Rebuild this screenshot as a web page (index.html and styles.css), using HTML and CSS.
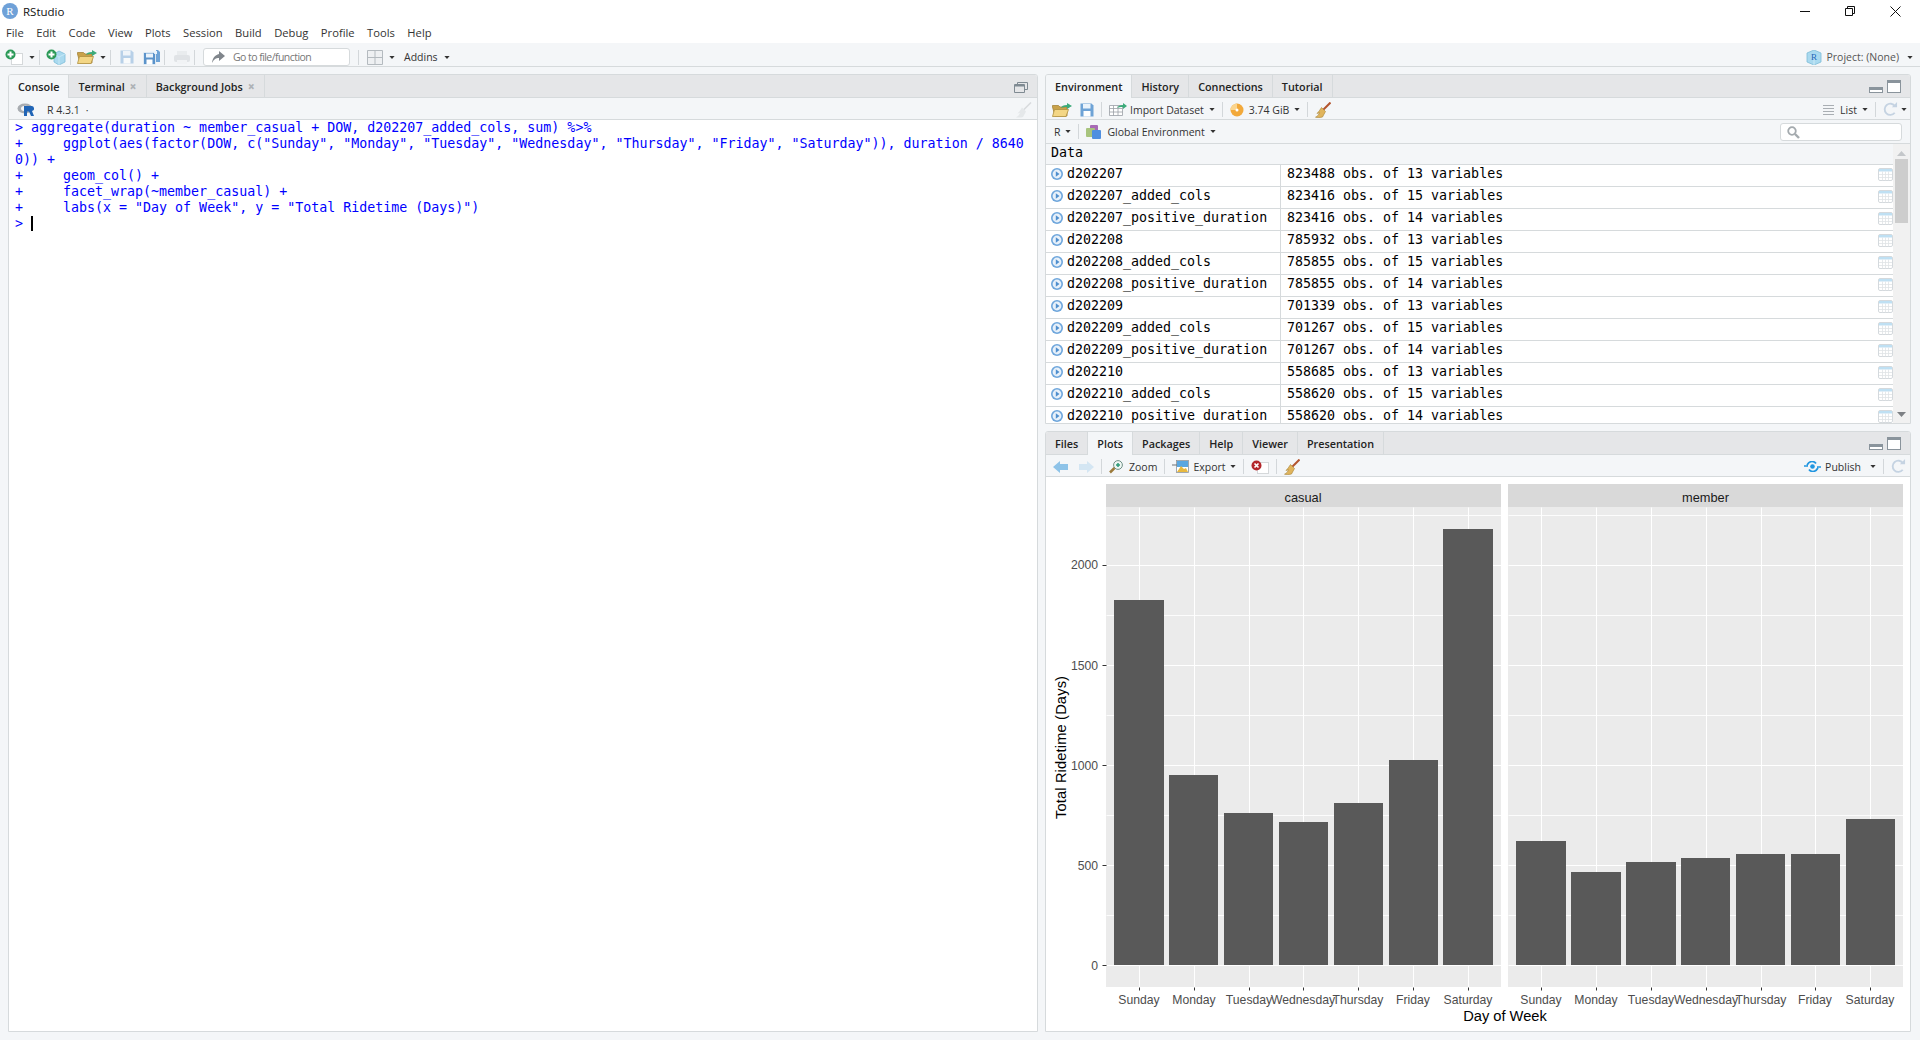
FILE: index.html
```html
<!DOCTYPE html>
<html lang="en">
<head>
    <meta charset="UTF-8">
    <title>RStudio</title>
    <link rel="stylesheet" href="styles.css">
</head>
<body>
    <!-- shared toolbar icons -->
    <svg class="icon-defs" width="0" height="0">
        <symbol id="i-arrow" viewBox="0 0 7 4"><path d="M0 0h7L3.500 4z" fill="#333"/></symbol>
        <symbol id="i-new" viewBox="0 0 20 16">
            <rect x="6.500" y="4.500" width="11" height="11" fill="#fff" stroke="#d5d8da"/>
            <circle cx="5.500" cy="5.500" r="5" fill="#2c9a58"/>
            <path d="M5.500 2.500v6M2.500 5.500h6" stroke="#fff" stroke-width="2"/>
        </symbol>
        <symbol id="i-project" viewBox="0 0 20 16">
            <path d="M8 5l5-3 6 3v8l-6 3-5-3z" fill="#a9d9ef" stroke="#7dbcd8" stroke-width=".8"/>
            <path d="M13 8v8M8 5l5 3 6-3" fill="none" stroke="#cdebf7" stroke-width=".8"/>
            <circle cx="5.500" cy="5.500" r="5" fill="#2c9a58"/>
            <path d="M5.500 2.500v6M2.500 5.500h6" stroke="#fff" stroke-width="2"/>
        </symbol>
        <symbol id="i-folder" viewBox="0 0 21 14">
            <path d="M.5 4V2.500h6l1.500 1.500h7v9H3z" fill="#c9a24a" stroke="#a5843a" stroke-width=".8"/>
            <path d="M2.500 6.500h14l-2.500 7H.5z" fill="#f3d685" stroke="#b0903f" stroke-width=".8"/>
            <path d="M9 5c.5-2 2.500-3 6-3V0l5 3-5 3V4c-2.500 0-4.500 0-6 1z" fill="#3cab7a"/>
        </symbol>
        <symbol id="i-save" viewBox="0 0 14 14">
            <path d="M.5.500h11l2 2v11H.5z" fill="#6ea3d6"/>
            <rect x="3" y="1" width="7.500" height="4.500" fill="#eaf3fb"/>
            <rect x="3.500" y="8" width="7" height="5.500" fill="#fff"/>
        </symbol>
        <symbol id="i-saveall" viewBox="0 0 17 15">
            <path d="M5 0h10l2 2v10h-4V0z" fill="#6ea3d6"/>
            <rect x="7" y="1" width="7" height="3" fill="#eaf3fb"/>
            <path d="M.5 2.500h10l2 2v10H.5z" fill="#5b93ca" stroke="#fff" stroke-width=".6"/>
            <rect x="3" y="3.500" width="7" height="4" fill="#eaf3fb"/>
            <rect x="3.500" y="9.500" width="6" height="5" fill="#fff"/>
        </symbol>
        <symbol id="i-broom" viewBox="0 0 16 16">
            <path d="M15.500.500L8 8" stroke="#b3552f" stroke-width="2"/>
            <path d="M6.500 5.500l4 4-3 5.500c-2.500.8-5 .5-7 .2 2-.8 3.500-2.700 4-4.500L2 11.500c1.500-1.500 3-3.500 4.500-6z" fill="#e0b45c" stroke="#a88334" stroke-width=".6"/>
        </symbol>
        <symbol id="i-refresh" viewBox="0 0 16 16">
            <path d="M12.500 11.500a6 6 0 1 1 .3-7" fill="none" stroke="#c5d3e2" stroke-width="2"/>
            <path d="M9.500 5.500h5.500V0z" fill="#c5d3e2"/>
        </symbol>
        <symbol id="i-pane-min" viewBox="0 0 14 6"><rect x=".5" y=".5" width="13" height="5" fill="#fff" stroke="#8a949c"/><rect x="1" y="1" width="12" height="2" fill="#8a949c"/></symbol>
        <symbol id="i-pane-max" viewBox="0 0 14 13"><rect x=".5" y=".5" width="13" height="12" fill="#fff" stroke="#8a949c"/><rect x="1" y="1" width="12" height="2" fill="#8a949c"/></symbol>
        <symbol id="i-play" viewBox="0 0 12 12"><circle cx="6" cy="6" r="6" fill="#6ea6dc"/><circle cx="6" cy="6" r="4.400" fill="#e8f1fa"/><path d="M4.800 3.300L8.500 6 4.800 8.700z" fill="#4f8fce"/></symbol>
        <symbol id="i-table" viewBox="0 0 15 13">
            <rect x=".5" y=".5" width="14" height="12" rx="1.500" fill="#fff" stroke="#d4d9dd"/>
            <rect x="1" y="1" width="13" height="2.500" fill="#bfe0f3"/>
            <path d="M1 6.500h13M1 9.500h13M4.500 3.500v9M7.500 3.500v9M10.500 3.500v9" stroke="#dfe3e6" stroke-width=".8"/>
        </symbol>
    </svg>

    <div class="app">
        <div class="titlebar">
            <span class="app-logo">R</span>
            <span class="app-name">RStudio</span>
            <div class="win-controls">
                <svg width="10" height="10" viewBox="0 0 10 10"><path d="M0 5.500h10" stroke="#111"/></svg>
                <svg width="10" height="10" viewBox="0 0 10 10"><path d="M.5 2.500h7v7h-7zM2.500 2.500v-2h7v7h-2" fill="none" stroke="#111"/></svg>
                <svg width="11" height="11" viewBox="0 0 11 11"><path d="M.5.500l10 10M10.500.500l-10 10" stroke="#111"/></svg>
            </div>
        </div>

        <nav class="menubar">
            <span>File</span><span>Edit</span><span>Code</span><span>View</span><span>Plots</span><span>Session</span><span>Build</span><span>Debug</span><span>Profile</span><span>Tools</span><span>Help</span>
        </nav>

        <div class="main-toolbar">
            <svg class="ico ml-5" width="20" height="16"><use href="#i-new"/></svg>
            <svg class="caret ml-4" width="7" height="4"><use href="#i-arrow"/></svg>
            <i class="sep"></i>
            <svg class="ico" width="20" height="16"><use href="#i-project"/></svg>
            <i class="sep"></i>
            <svg class="ico" width="21" height="14"><use href="#i-folder"/></svg>
            <svg class="caret ml-2" width="7" height="4"><use href="#i-arrow"/></svg>
            <i class="sep"></i>
            <svg class="ico dim ml-3" width="14" height="14"><use href="#i-save"/></svg>
            <svg class="ico ml-9" width="17" height="15"><use href="#i-saveall"/></svg>
            <i class="sep"></i>
            <svg class="ico dim ml-3" width="16" height="13" viewBox="0 0 16 13"><rect x="3" y="0" width="10" height="5" fill="#dde1e4"/><rect y="4" width="16" height="7" rx="2" fill="#c9ced2"/><rect x="3" y="9" width="10" height="4" fill="#eef0f2"/></svg>
            <i class="sep"></i>
            <div class="goto ml-2">
                <svg width="13" height="12" viewBox="0 0 13 12"><path d="M7 0l6 5-6 5V7C4 7 2 8 0 12c.5-5 3-8 7-9z" fill="#80868c"/></svg>
                <span>Go to file/function</span>
            </div>
            <i class="sep ml-8"></i>
            <svg class="ico ml-2" width="16" height="15" viewBox="0 0 16 15"><path d="M.5.500h15v14H.5zM.5 7.500h15M8 .5v14" fill="#eef0f2" stroke="#b4babf"/></svg>
            <svg class="caret ml-6" width="7" height="4"><use href="#i-arrow"/></svg>
            <span class="tb-text addins">Addins</span>
            <svg class="caret ml-6" width="7" height="4"><use href="#i-arrow"/></svg>
            <div class="project">
                <svg width="16" height="15" viewBox="0 0 16 15"><path d="M1 3l7-3 7 3v9l-7 3-7-3z" fill="#a9d9ef" stroke="#7dbcd8" stroke-width=".8"/><path d="M8 4v11" stroke="#d5eef9" stroke-width=".8"/><text x="8" y="10" class="cube-r">R</text></svg>
                <span>Project: (None)</span>
                <svg class="caret ml-3" width="7" height="4"><use href="#i-arrow"/></svg>
            </div>
        </div>

        <div class="workspace">
            <section class="pane pane-left">
                <div class="tabs">
                    <div class="tab active">Console</div>
                    <div class="tab">Terminal <b class="x">×</b></div>
                    <div class="tab">Background Jobs <b class="x">×</b></div>
                    <div class="pane-btns">
                        <svg width="14" height="11" viewBox="0 0 14 11"><path d="M3.500 2.500V.5h10v7h-3" fill="none" stroke="#7f8a92"/><path d="M.5 2.500h10v8H.5z" fill="none" stroke="#7f8a92"/><path d="M1 3.500h9" stroke="#7f8a92" stroke-width="2"/></svg>
                    </div>
                </div>
                <div class="toolbar console-bar">
                    <svg width="18" height="13" viewBox="0 0 18 13"><ellipse cx="8" cy="5.500" rx="7.500" ry="5" fill="#a8acb1"/><ellipse cx="8.500" cy="5.500" rx="4.500" ry="2.800" fill="#f4f6f8"/><path d="M7 3h7a2.500 2.500 0 0 1 1 5l2 5h-3l-2-4.500h-2V13H7z" fill="#2165b6"/></svg>
                    <span class="tb-text r-version">R 4.3.1</span>
                    <span class="tb-text tiny-dot">·</span>
                    <svg class="ico dim push-right clear-btn" width="19" height="16" viewBox="0 0 16 16"><path d="M15.500.500L8 8" stroke="#b5babd" stroke-width="1.500"/><path d="M6.500 5.500l4 4-3 5.500c-2.500.8-5 .5-7 .2 2-.8 3.500-2.700 4-4.500L2 11.500c1.500-1.500 3-3.500 4.500-6z" fill="#d4d8da"/></svg>
                </div>
                <div class="console">
                    <div>&gt; aggregate(duration ~ member_casual + DOW, d202207_added_cols, sum) %&gt;%</div>
                    <div>+     ggplot(aes(factor(DOW, c("Sunday", "Monday", "Tuesday", "Wednesday", "Thursday", "Friday", "Saturday")), duration / 8640</div>
                    <div>0)) +</div>
                    <div>+     geom_col() +</div>
                    <div>+     facet_wrap(~member_casual) +</div>
                    <div>+     labs(x = "Day of Week", y = "Total Ridetime (Days)")</div>
                    <div>&gt; <span class="cursor"></span></div>
                </div>
            </section>

            <div class="right-col">
                <section class="pane pane-env">
                    <div class="tabs">
                        <div class="tab active">Environment</div>
                        <div class="tab">History</div>
                        <div class="tab">Connections</div>
                        <div class="tab">Tutorial</div>
                        <div class="pane-btns">
                            <svg width="14" height="6"><use href="#i-pane-min"/></svg>
                            <svg width="14" height="13"><use href="#i-pane-max"/></svg>
                        </div>
                    </div>
                    <div class="toolbar">
                        <svg class="ico ml-6" width="21" height="14"><use href="#i-folder"/></svg>
                        <svg class="ico ml-7" width="14" height="14"><use href="#i-save"/></svg>
                        <i class="sep"></i>
                        <svg class="ico" width="18" height="13" viewBox="0 0 18 13"><path d="M.5 2.500h13v10H.5zM.5 5.500h13M.5 9h13M4.500 2.500v10M9 2.500v10" fill="#fff" stroke="#9aa0a6" stroke-width=".8"/><path d="M8 5c1-2 3-3 6-3V0l4 3-4 3V4c-2.500 0-4.500 0-6 1z" fill="#3cab7a"/></svg>
                        <span class="tb-text ml-3">Import Dataset</span>
                        <svg class="caret" width="7" height="4"><use href="#i-arrow"/></svg>
                        <i class="sep"></i>
                        <svg class="ico" width="14" height="14" viewBox="0 0 14 14"><circle cx="7" cy="7" r="6.500" fill="#f2a93b"/><path d="M7 7V.5A6.500 6.500 0 0 0 .5 7z" fill="#fbd58e"/><circle cx="7" cy="7" r="1.500" fill="#fff"/></svg>
                        <span class="tb-text ml-5">3.74 GiB</span>
                        <svg class="caret" width="7" height="4"><use href="#i-arrow"/></svg>
                        <i class="sep"></i>
                        <svg class="ico" width="16" height="16"><use href="#i-broom"/></svg>
                        <svg class="ico push-right" width="11" height="10" viewBox="0 0 11 10"><path d="M0 .5h11M0 3.500h11M0 6.500h11M0 9.500h11" stroke="#a9aeb3"/></svg>
                        <span class="tb-text ml-6">List</span>
                        <svg class="caret" width="7" height="4"><use href="#i-arrow"/></svg>
                        <i class="sep"></i>
                        <svg class="ico" width="15" height="15"><use href="#i-refresh"/></svg>
                        <svg class="caret ml-3 mr-3" width="7" height="4"><use href="#i-arrow"/></svg>
                    </div>
                    <div class="toolbar env-bar">
                        <span class="tb-text ml-8">R</span>
                        <svg class="caret" width="7" height="4"><use href="#i-arrow"/></svg>
                        <i class="sep"></i>
                        <svg class="ico" width="15" height="14" viewBox="0 0 15 14"><rect x="4" width="8" height="9" rx="1" fill="#a86bb5"/><rect y="3" width="9" height="9" rx="1" fill="#a8c47e"/><rect x="6" y="5" width="9" height="9" rx="1" fill="#4f8fe0"/></svg>
                        <span class="tb-text ml-6">Global Environment</span>
                        <svg class="caret" width="7" height="4"><use href="#i-arrow"/></svg>
                        <div class="env-search">
                            <svg width="13" height="13" viewBox="0 0 13 13"><circle cx="5" cy="5" r="3.800" fill="none" stroke="#a4aaae" stroke-width="1.800"/><path d="M8 8l4 4" stroke="#a4aaae" stroke-width="2.400"/></svg>
                        </div>
                    </div>
                    <div class="env-body">
                        <div class="env-list">
                            <div class="env-head">Data</div>
                            <div class="env-row"><span class="env-name"><svg width="12" height="12"><use href="#i-play"/></svg>d202207</span><span class="env-val">823488 obs. of 13 variables</span><svg class="env-grid" width="15" height="13"><use href="#i-table"/></svg></div>
                            <div class="env-row"><span class="env-name"><svg width="12" height="12"><use href="#i-play"/></svg>d202207_added_cols</span><span class="env-val">823416 obs. of 15 variables</span><svg class="env-grid" width="15" height="13"><use href="#i-table"/></svg></div>
                            <div class="env-row"><span class="env-name"><svg width="12" height="12"><use href="#i-play"/></svg>d202207_positive_duration</span><span class="env-val">823416 obs. of 14 variables</span><svg class="env-grid" width="15" height="13"><use href="#i-table"/></svg></div>
                            <div class="env-row"><span class="env-name"><svg width="12" height="12"><use href="#i-play"/></svg>d202208</span><span class="env-val">785932 obs. of 13 variables</span><svg class="env-grid" width="15" height="13"><use href="#i-table"/></svg></div>
                            <div class="env-row"><span class="env-name"><svg width="12" height="12"><use href="#i-play"/></svg>d202208_added_cols</span><span class="env-val">785855 obs. of 15 variables</span><svg class="env-grid" width="15" height="13"><use href="#i-table"/></svg></div>
                            <div class="env-row"><span class="env-name"><svg width="12" height="12"><use href="#i-play"/></svg>d202208_positive_duration</span><span class="env-val">785855 obs. of 14 variables</span><svg class="env-grid" width="15" height="13"><use href="#i-table"/></svg></div>
                            <div class="env-row"><span class="env-name"><svg width="12" height="12"><use href="#i-play"/></svg>d202209</span><span class="env-val">701339 obs. of 13 variables</span><svg class="env-grid" width="15" height="13"><use href="#i-table"/></svg></div>
                            <div class="env-row"><span class="env-name"><svg width="12" height="12"><use href="#i-play"/></svg>d202209_added_cols</span><span class="env-val">701267 obs. of 15 variables</span><svg class="env-grid" width="15" height="13"><use href="#i-table"/></svg></div>
                            <div class="env-row"><span class="env-name"><svg width="12" height="12"><use href="#i-play"/></svg>d202209_positive_duration</span><span class="env-val">701267 obs. of 14 variables</span><svg class="env-grid" width="15" height="13"><use href="#i-table"/></svg></div>
                            <div class="env-row"><span class="env-name"><svg width="12" height="12"><use href="#i-play"/></svg>d202210</span><span class="env-val">558685 obs. of 13 variables</span><svg class="env-grid" width="15" height="13"><use href="#i-table"/></svg></div>
                            <div class="env-row"><span class="env-name"><svg width="12" height="12"><use href="#i-play"/></svg>d202210_added_cols</span><span class="env-val">558620 obs. of 15 variables</span><svg class="env-grid" width="15" height="13"><use href="#i-table"/></svg></div>
                            <div class="env-row"><span class="env-name"><svg width="12" height="12"><use href="#i-play"/></svg>d202210_positive_duration</span><span class="env-val">558620 obs. of 14 variables</span><svg class="env-grid" width="15" height="13"><use href="#i-table"/></svg></div>
                        </div>
                        <div class="scrollbar">
                            <svg width="9" height="5" viewBox="0 0 9 5"><path d="M0 5h9L4.500 0z" fill="#c4c7ca"/></svg>
                            <div class="thumb"></div>
                            <svg class="scroll-down" width="9" height="5" viewBox="0 0 9 5"><path d="M0 0h9L4.500 5z" fill="#7d8084"/></svg>
                        </div>
                    </div>
                </section>

                <section class="pane pane-plots">
                    <div class="tabs">
                        <div class="tab">Files</div>
                        <div class="tab active">Plots</div>
                        <div class="tab">Packages</div>
                        <div class="tab">Help</div>
                        <div class="tab">Viewer</div>
                        <div class="tab">Presentation</div>
                        <div class="pane-btns">
                            <svg width="14" height="6"><use href="#i-pane-min"/></svg>
                            <svg width="14" height="13"><use href="#i-pane-max"/></svg>
                        </div>
                    </div>
                    <div class="toolbar">
                        <svg class="ico ml-7" width="15" height="12" viewBox="0 0 15 12"><path d="M0 6l7-6v3h8v6H7v3z" fill="#8ec3e8"/></svg>
                        <svg class="ico ml-11 dim-more" width="15" height="12" viewBox="0 0 15 12"><path d="M15 6L8 0v3H0v6h8v3z" fill="#8ec3e8"/></svg>
                        <i class="sep"></i>
                        <svg class="ico" width="14" height="14" viewBox="0 0 14 14"><circle cx="9" cy="5" r="4.400" fill="#eef7f3" stroke="#6f8f86"/><path d="M9 3v4M7 5h4" stroke="#2c9a78" stroke-width="1.500"/><path d="M5.500 8L1 12.500" stroke="#9c7a3a" stroke-width="2.500"/></svg>
                        <span class="tb-text ml-6">Zoom</span>
                        <i class="sep"></i>
                        <svg class="ico" width="17" height="13" viewBox="0 0 17 13"><rect x="4.500" y=".5" width="12" height="12" fill="#fff" stroke="#8c9298" stroke-width=".8"/><rect x="5" y="1" width="11" height="6" fill="#5aa7e0"/><path d="M5 12l4-6 3 3 2-1 2 4z" fill="#e8b93f"/><path d="M0 5h5" stroke="#6d7378" stroke-width="1.200"/></svg>
                        <span class="tb-text ml-4">Export</span>
                        <svg class="caret" width="7" height="4"><use href="#i-arrow"/></svg>
                        <i class="sep"></i>
                        <svg class="ico" width="18" height="14" viewBox="0 0 18 14"><rect x="6.500" y="2.500" width="11" height="11" fill="#fff" stroke="#d5d8da"/><circle cx="5.500" cy="5.500" r="5" fill="#b3262b"/><path d="M3.500 3.500l4 4M7.500 3.500l-4 4" stroke="#fff" stroke-width="1.700"/></svg>
                        <i class="sep"></i>
                        <svg class="ico" width="16" height="16"><use href="#i-broom"/></svg>
                        <svg class="ico push-right" width="17" height="11" viewBox="0 0 17 11"><path d="M3 4c1.500-2.500 3-3.500 5-3.500s3 .6 4 2M14 7c-1.500 2.500-3 3.500-5 3.500S6 10 5 8.500M0 5h4M13 6h4" fill="none" stroke="#2196e0" stroke-width="1.700"/><circle cx="8.500" cy="5.500" r="2.300" fill="#2196e0"/></svg>
                        <span class="tb-text ml-4">Publish</span>
                        <svg class="caret ml-9" width="7" height="4"><use href="#i-arrow"/></svg>
                        <i class="sep"></i>
                        <svg class="ico mr-4" width="15" height="15"><use href="#i-refresh"/></svg>
                    </div>
                    <div class="plot-area">
                        <!-- coordinates in the viewBox are window pixels -->
                        <svg class="plot" width="864" height="555" viewBox="1046 477 864 555">
                            <rect class="strip" x="1106" y="484" width="395" height="23"/>
                            <rect class="strip" x="1508" y="484" width="395" height="23"/>
                            <text class="strip-text" x="1303" y="502">casual</text>
                            <text class="strip-text" x="1705.500" y="502">member</text>

                            <rect class="panel" x="1106" y="507" width="395" height="480"/>
                            <rect class="panel" x="1508" y="507" width="395" height="480"/>

                            <path class="grid minor" d="M1106 515H1501M1106 615H1501M1106 715H1501M1106 815H1501M1106 915H1501M1508 515H1903M1508 615H1903M1508 715H1903M1508 815H1903M1508 915H1903"/>
                            <path class="grid" d="M1106 565H1501M1106 665H1501M1106 765H1501M1106 865H1501M1106 965H1501M1508 565H1903M1508 665H1903M1508 765H1903M1508 865H1903M1508 965H1903"/>
                            <path class="grid" d="M1139 507V987M1194 507V987M1249 507V987M1303 507V987M1358 507V987M1413 507V987M1468 507V987M1541 507V987M1596 507V987M1651 507V987M1706 507V987M1761 507V987M1815 507V987M1870 507V987"/>

                            <g class="bars">
                                <rect x="1114" y="600" width="50" height="365"/>
                                <rect x="1169" y="775" width="49" height="190"/>
                                <rect x="1224" y="813" width="49" height="152"/>
                                <rect x="1279" y="822" width="49" height="143"/>
                                <rect x="1334" y="803" width="49" height="162"/>
                                <rect x="1389" y="760" width="49" height="205"/>
                                <rect x="1443" y="529" width="50" height="436"/>
                                <rect x="1516" y="841" width="50" height="124"/>
                                <rect x="1571" y="872" width="50" height="93"/>
                                <rect x="1626" y="862" width="50" height="103"/>
                                <rect x="1681" y="858" width="49" height="107"/>
                                <rect x="1736" y="854" width="49" height="111"/>
                                <rect x="1791" y="854" width="49" height="111"/>
                                <rect x="1846" y="819" width="49" height="146"/>
                            </g>

                            <path class="ticks" d="M1102 565H1106M1102 665H1106M1102 765H1106M1102 865H1106M1102 965H1106M1139 987V990M1194 987V990M1249 987V990M1303 987V990M1358 987V990M1413 987V990M1468 987V990M1541 987V990M1596 987V990M1651 987V990M1706 987V990M1761 987V990M1815 987V990M1870 987V990"/>

                            <g class="y-labels">
                                <text x="1098" y="569">2000</text>
                                <text x="1098" y="670">1500</text>
                                <text x="1098" y="770">1000</text>
                                <text x="1098" y="870">500</text>
                                <text x="1098" y="970">0</text>
                            </g>
                            <g class="x-labels">
                                <text x="1139" y="1004">Sunday</text>
                                <text x="1194" y="1004">Monday</text>
                                <text x="1249" y="1004">Tuesday</text>
                                <text x="1303" y="1004">Wednesday</text>
                                <text x="1358" y="1004">Thursday</text>
                                <text x="1413" y="1004">Friday</text>
                                <text x="1468" y="1004">Saturday</text>
                                <text x="1541" y="1004">Sunday</text>
                                <text x="1596" y="1004">Monday</text>
                                <text x="1651" y="1004">Tuesday</text>
                                <text x="1706" y="1004">Wednesday</text>
                                <text x="1761" y="1004">Thursday</text>
                                <text x="1815" y="1004">Friday</text>
                                <text x="1870" y="1004">Saturday</text>
                            </g>
                            <text class="axis-title" x="1505" y="1021">Day of Week</text>
                            <text class="axis-title" x="1066" y="747.500" transform="rotate(-90 1066 747.500)" textLength="143">Total Ridetime (Days)</text>
                        </svg>
                    </div>
                </section>
            </div>
        </div>
    </div>
</body>
</html>
```

FILE: styles.css
```css
* {
    margin: 0;
    padding: 0;
    box-sizing: border-box;
}

body {
    font-family: "Open Sans", "Noto Sans", sans-serif;
    font-size: 11px;
    color: #333;
    background: #f4f6f8;
    overflow: hidden;
}

.icon-defs {
    position: absolute;
}

.app {
    width: 1920px;
    height: 1040px;
    display: flex;
    flex-direction: column;
}

/* window chrome */
.titlebar {
    height: 22px;
    background: #fff;
    display: flex;
    align-items: center;
    padding-left: 2px;
    color: #111;
}

.app-logo {
    width: 16px;
    height: 16px;
    border-radius: 50%;
    background: #6fa1d8;
    color: #fff;
    font-family: "Liberation Serif", serif;
    font-size: 11px;
    line-height: 16px;
    text-align: center;
}

.app-name {
    margin-left: 5px;
    font-size: 11.5px;
}

.win-controls {
    margin-left: auto;
    display: flex;
    align-items: center;
    gap: 35px;
    padding-right: 19px;
}

.menubar {
    height: 21px;
    background: #fff;
    display: flex;
    align-items: center;
    gap: 12.5px;
    padding-left: 6px;
    font-size: 11.2px;
    color: #333;
}

.main-toolbar {
    height: 24px;
    display: flex;
    align-items: center;
    border-bottom: 1px solid #d6dadc;
    padding: 5px 7px 0 0;
}

.main-toolbar .sep {
    margin: 0 6px 0 4px;
}

.main-toolbar .sep.ml-8 {
    margin-left: 8px;
}

.toolbar {
    height: 22px;
    flex: none;
    display: flex;
    align-items: center;
    border-bottom: 1px solid #d6dadc;
    background: #f4f6f8;
    padding-top: 2px;
}

.ico {
    flex: none;
}

.dim {
    opacity: .45;
}

.dim-more {
    opacity: .3;
}

.caret {
    flex: none;
    width: 6px;
    height: 3px;
    margin-left: 5px;
}

.sep {
    flex: none;
    width: 1px;
    height: 15px;
    background: #d3d7da;
    margin: 0 7px;
}

.tb-text {
    white-space: nowrap;
    font-size: 10.5px;
    color: #333;
}

.push-right {
    margin-left: auto;
}

.ml-2 { margin-left: 2px; }
.ml-3 { margin-left: 3px; }
.ml-4 { margin-left: 4px; }
.ml-5 { margin-left: 5px; }
.ml-6 { margin-left: 6px; }
.ml-7 { margin-left: 7px; }
.ml-8 { margin-left: 8px; }
.ml-9 { margin-left: 9px; }
.ml-10 { margin-left: 10px; }
.ml-11 { margin-left: 11px; }
.mr-3 { margin-right: 3px; }
.mr-4 { margin-right: 4px; }

.goto {
    width: 147px;
    height: 18px;
    flex: none;
    display: flex;
    align-items: center;
    gap: 8px;
    padding-left: 8px;
    background: #fff;
    border: 1px solid #d6dadc;
    border-radius: 3px;
    font-size: 10.5px;
    letter-spacing: -.55px;
    color: #777;
    white-space: nowrap;
}

.addins {
    margin-left: 9px;
}

.project {
    margin-left: auto;
    display: flex;
    align-items: center;
    gap: 5px;
    font-size: 10.5px;
    color: #555;
}

.cube-r {
    font-family: "Liberation Serif", serif;
    font-size: 9px;
    fill: #2165b6;
    text-anchor: middle;
}

/* panes */
.workspace {
    flex: 1;
    min-height: 0;
    display: flex;
    gap: 7px;
    padding: 7px 0 8px 8px;
}

.pane {
    background: #fff;
    border: 1px solid #d6dadc;
    border-radius: 3px 3px 0 0;
    display: flex;
    flex-direction: column;
    overflow: hidden;
}

.pane-left {
    width: 1030px;
}

.right-col {
    width: 866px;
    display: flex;
    flex-direction: column;
    gap: 7px;
}

.pane-env {
    height: 350px;
    flex: none;
}

.pane-plots {
    flex: 1;
    min-height: 0;
}

.tabs {
    height: 23px;
    flex: none;
    display: flex;
    background: #e5e6e8;
    border-bottom: 1px solid #d6dadc;
}

.tab {
    height: 23px;
    padding: 0 9px;
    line-height: 24px;
    font-size: 10.8px;
    font-weight: 600;
    color: #222;
    white-space: nowrap;
    border-right: 1px solid #d6dadc;
}

.tab.active {
    background: #f4f6f8;
}

.x {
    color: #aeb2b6;
    font-size: 12px;
    margin-left: 2px;
}

.pane-btns {
    margin-left: auto;
    display: flex;
    align-items: flex-end;
    gap: 4px;
    padding: 0 9px 4px 0;
}

/* console */
.console-bar {
    padding-left: 8px;
}

.r-version {
    margin-left: 12px;
}

.tiny-dot {
    margin-left: 6px;
}

.clear-btn {
    margin-right: 4px;
}

.console {
    flex: 1;
    padding: 0 6px;
    font-family: "DejaVu Sans Mono", monospace;
    font-size: 13.3px;
    line-height: 16px;
    color: #00f;
}

.console div {
    white-space: pre;
}

.cursor {
    display: inline-block;
    width: 2px;
    height: 15px;
    background: #000;
    vertical-align: -3px;
}

/* environment */
.env-bar {
    height: 24px;
    position: relative;
    padding-top: 0;
}

.env-search {
    position: absolute;
    right: 8px;
    top: 3px;
    width: 122px;
    height: 18px;
    background: #fff;
    border: 1px solid #d6dadc;
    border-radius: 3px;
    padding: 2px 6px;
}

.env-body {
    flex: 1;
    min-height: 0;
    display: flex;
    overflow: hidden;
}

.env-list {
    flex: 1;
    font-family: "DejaVu Sans Mono", monospace;
    font-size: 13.3px;
    color: #000;
}

.env-head {
    height: 21px;
    line-height: 18px;
    padding-left: 5px;
    background: #f4f6f8;
    border-bottom: 1px solid #d6dadc;
}

.env-row {
    height: 22px;
    display: flex;
    align-items: center;
    line-height: 18px;
    border-bottom: 1px solid #d6dadc;
}

.env-name {
    width: 235px;
    height: 21px;
    flex: none;
    display: flex;
    align-items: center;
    gap: 4px;
    padding: 0 0 3px 5px;
    border-right: 1px solid #d6dadc;
    white-space: pre;
}

.env-val {
    flex: 1;
    padding: 0 0 3px 6px;
    white-space: pre;
}

.env-grid {
    margin-bottom: 3px;
}

.scrollbar {
    width: 17px;
    flex: none;
    display: flex;
    flex-direction: column;
    align-items: center;
    padding-top: 7px;
    background: #f1f1f1;
}

.thumb {
    width: 13px;
    height: 64px;
    margin-top: 3px;
    background: #cdcdcd;
}

.scroll-down {
    margin-top: auto;
    margin-bottom: 6px;
}

/* plot */
.plot-area {
    flex: 1;
    min-height: 0;
}

.plot {
    display: block;
}

.strip {
    fill: #d9d9d9;
}

.panel {
    fill: #ebebeb;
}

.strip-text {
    font-family: "Liberation Sans", sans-serif;
    font-size: 12.8px;
    fill: #1a1a1a;
    text-anchor: middle;
}

.grid {
    fill: none;
    stroke: #fff;
    stroke-width: 1;
    transform: translate(.5px, .5px);
}

.grid.minor {
    stroke-opacity: .85;
}

.bars {
    fill: #595959;
}

.ticks {
    fill: none;
    stroke: #333;
    stroke-width: 1;
    transform: translate(.5px, .5px);
}

.y-labels text,
.x-labels text {
    font-family: "Liberation Sans", sans-serif;
    font-size: 12.2px;
    fill: #4d4d4d;
}

.y-labels text {
    text-anchor: end;
}

.x-labels text {
    text-anchor: middle;
}

.axis-title {
    font-family: "Liberation Sans", sans-serif;
    font-size: 14.67px;
    fill: #000;
    text-anchor: middle;
}
```
